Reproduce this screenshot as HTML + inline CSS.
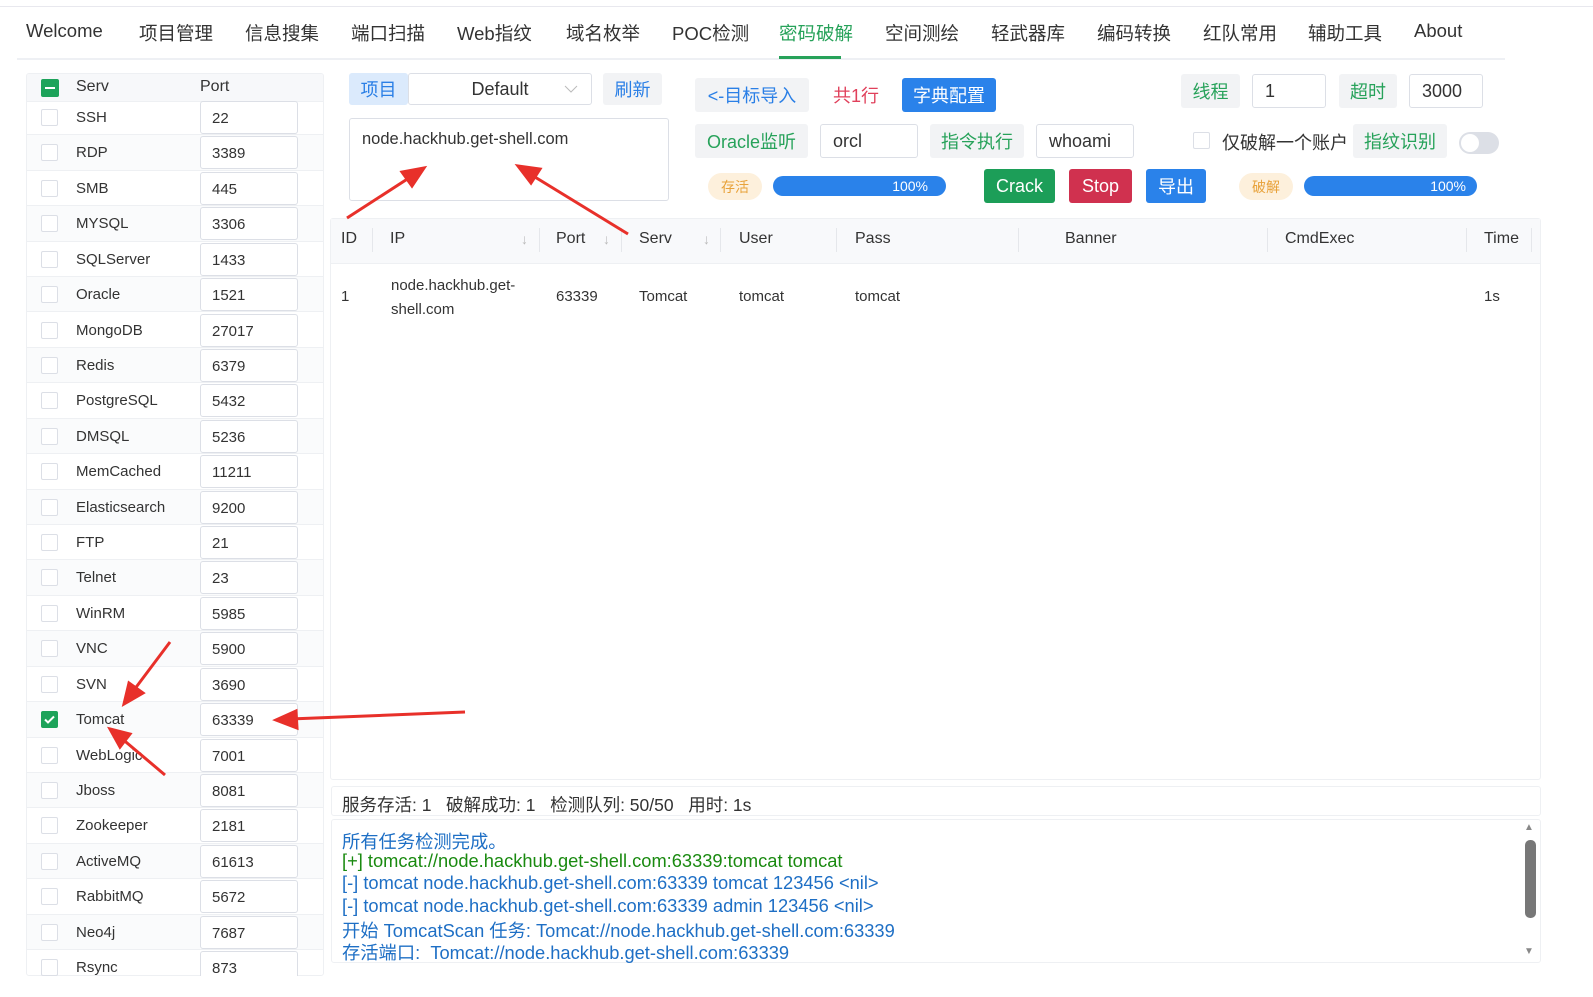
<!DOCTYPE html>
<html><head><meta charset="utf-8"><style>
*{box-sizing:border-box;margin:0;padding:0}
body{width:1593px;height:997px;background:#fff;font-family:"Liberation Sans","Noto Sans CJK SC",sans-serif;color:#333;position:relative;overflow:hidden}
.a{position:absolute}
.nav span{position:absolute;top:20px;font-size:18.5px;color:#333}
.btn{position:absolute;display:flex;align-items:center;justify-content:center;font-size:18px;border-radius:3px}
.gbtn{background:#f2f3f5;color:#27a25a}
.inp{position:absolute;border:1px solid #dcdfe6;border-radius:3px;background:#fff;font-size:18px;padding-left:12px;display:flex;align-items:center;color:#333}
.row{position:absolute;left:27px;width:296px;height:35.4px;border-bottom:1px solid #eef0f3;font-size:15px}
.row .cb{position:absolute;left:14px;top:9px;width:17px;height:17px;border:1px solid #dcdfe6;border-radius:2px;background:#fff}
.row .n{position:absolute;left:49px;top:9px}
.row .p{position:absolute;left:173px;top:1px;width:98px;height:33px;border:1px solid #dcdfe6;border-radius:3px;background:#fff;padding:8px 0 0 11px}
.th{position:absolute;top:230px;font-size:16px;color:#333}
.log div{height:22.2px;font-size:18.3px;color:#1e6fc5;white-space:nowrap}
</style></head><body>
<div class="a" style="left:0;top:6px;width:1593px;height:1px;background:#e8e8ee"></div>
<div class="nav">
<span style="left:26px">Welcome</span><span style="left:139px">项目管理</span><span style="left:245px">信息搜集</span><span style="left:351px">端口扫描</span><span style="left:457px">Web指纹</span><span style="left:566px">域名枚举</span><span style="left:672px">POC检测</span><span style="left:779px;color:#27a25a">密码破解</span><span style="left:885px">空间测绘</span><span style="left:991px">轻武器库</span><span style="left:1097px">编码转换</span><span style="left:1203px">红队常用</span><span style="left:1308px">辅助工具</span><span style="left:1414px">About</span>
</div>
<div class="a" style="left:17px;top:58px;width:1488px;height:2px;background:#eef0f4"></div>
<div class="a" style="left:779px;top:56px;width:62px;height:3px;background:#27a25a"></div>

<div class="a" style="left:26px;top:73px;width:298px;height:903px;border:1px solid #eef0f3;border-radius:3px;overflow:hidden">
<div class="a" style="left:0;top:0;width:298px;height:28px;background:#f7f8fa;border-bottom:1px solid #eef0f3"></div>
<div class="a" style="left:14px;top:5px;width:18px;height:18px;background:#1da35a;border-radius:2px"><div class="a" style="left:4px;top:8px;width:10px;height:2px;background:#fff"></div></div>
<div class="a" style="left:49px;top:4px;font-size:16px">Serv</div>
<div class="a" style="left:173px;top:4px;font-size:16px">Port</div>
</div>
<div id="rows"></div>
<script>
var d=[["SSH",22],["RDP",3389],["SMB",445],["MYSQL",3306],["SQLServer",1433],["Oracle",1521],["MongoDB",27017],["Redis",6379],["PostgreSQL",5432],["DMSQL",5236],["MemCached",11211],["Elasticsearch",9200],["FTP",21],["Telnet",23],["WinRM",5985],["VNC",5900],["SVN",3690],["Tomcat",63339],["WebLogic",7001],["Jboss",8081],["Zookeeper",2181],["ActiveMQ",61613],["RabbitMQ",5672],["Neo4j",7687],["Rsync",873]];
var h="";d.forEach(function(r,i){var t=100+i*35.42;var ck=r[0]=="Tomcat";
h+='<div class="row" style="top:'+t+'px;'+(i%2?'background:#fafbfc':'')+'"><div class="cb" style="'+(ck?'background:#1da35a;border-color:#1da35a':'')+'">'+(ck?'<svg width="15" height="15" viewBox="0 0 15 15"><path d="M3 7.5l3 3 6-6" stroke="#fff" stroke-width="2" fill="none"/></svg>':'')+'</div><div class="n">'+r[0]+'</div><div class="p">'+r[1]+'</div></div>';});
document.getElementById("rows").innerHTML=h;
</script>
<div class="a" style="left:0;top:976px;width:340px;height:21px;background:#fff"></div>

<div class="btn" style="left:349px;top:73px;width:59px;height:32px;background:#dbeafc;color:#2a7fe6">项目</div>
<div class="inp" style="left:408px;top:73px;width:184px;height:32px;justify-content:center;padding:0">Default</div>
<svg class="a" style="left:564px;top:84px" width="14" height="10"><path d="M1 2l6 6 6-6" stroke="#bbb" fill="none"/></svg>
<div class="btn" style="left:603px;top:73px;width:59px;height:32px;background:#f2f3f5;color:#2a7fe6">刷新</div>
<div class="inp" style="left:349px;top:118px;width:320px;height:83px;align-items:flex-start;padding-top:11px;font-size:16.5px">node.hackhub.get-shell.com</div>

<div class="btn" style="left:695px;top:78px;width:114px;height:34px;background:#f2f3f5;color:#2a7fe6">&lt;-目标导入</div>
<div class="a" style="left:833px;top:82px;font-size:18px;color:#e0405b">共1行</div>
<div class="btn" style="left:902px;top:78px;width:94px;height:34px;background:#2a82ea;color:#fff">字典配置</div>
<div class="btn gbtn" style="left:1181px;top:74px;width:59px;height:34px">线程</div>
<div class="inp" style="left:1252px;top:74px;width:74px;height:34px">1</div>
<div class="btn gbtn" style="left:1339px;top:74px;width:58px;height:34px">超时</div>
<div class="inp" style="left:1409px;top:74px;width:74px;height:34px">3000</div>

<div class="btn gbtn" style="left:695px;top:124px;width:113px;height:34px">Oracle监听</div>
<div class="inp" style="left:820px;top:124px;width:98px;height:34px">orcl</div>
<div class="btn gbtn" style="left:930px;top:124px;width:94px;height:34px">指令执行</div>
<div class="inp" style="left:1036px;top:124px;width:98px;height:34px">whoami</div>
<div class="a" style="left:1193px;top:132px;width:17px;height:17px;border:1px solid #dcdfe6;border-radius:2px"></div>
<div class="a" style="left:1222px;top:129px;font-size:18px">仅破解一个账户</div>
<div class="btn gbtn" style="left:1353px;top:124px;width:94px;height:34px">指纹识别</div>
<div class="a" style="left:1459px;top:132px;width:40px;height:22px;border-radius:11px;background:#dcdfe6"><div class="a" style="left:2px;top:2px;width:18px;height:18px;border-radius:50%;background:#fff"></div></div>

<div class="btn" style="left:708px;top:173px;width:54px;height:27px;border-radius:14px;background:#fdf0dc;color:#e8a23a;font-size:14px">存活</div>
<div class="a" style="left:773px;top:176px;width:173px;height:20px;border-radius:10px;background:#2a82ea;color:#fff;font-size:14px;text-align:right;padding-right:18px;line-height:20px">100%</div>
<div class="btn" style="left:984px;top:169px;width:71px;height:34px;background:#1c9e58;color:#fff">Crack</div>
<div class="btn" style="left:1069px;top:169px;width:63px;height:34px;background:#d0314f;color:#fff">Stop</div>
<div class="btn" style="left:1146px;top:169px;width:60px;height:34px;background:#2a82ea;color:#fff">导出</div>
<div class="btn" style="left:1239px;top:173px;width:54px;height:27px;border-radius:14px;background:#fdf0dc;color:#e8a23a;font-size:14px">破解</div>
<div class="a" style="left:1304px;top:176px;width:173px;height:20px;border-radius:10px;background:#2a82ea;color:#fff;font-size:14px;text-align:right;padding-right:11px;line-height:20px">100%</div>

<div class="a" style="left:330px;top:218px;width:1211px;height:562px;border:1px solid #eef0f3;border-radius:3px"></div>
<div class="a" style="left:331px;top:219px;width:1209px;height:45px;background:#f8f9fb;border-bottom:1px solid #eef0f3"></div>
<div class="th" style="left:341px">ID</div><div class="th" style="left:390px">IP</div><div class="th" style="left:556px">Port</div><div class="th" style="left:639px">Serv</div><div class="th" style="left:739px">User</div><div class="th" style="left:855px">Pass</div><div class="th" style="left:1065px">Banner</div><div class="th" style="left:1285px">CmdExec</div><div class="th" style="left:1484px">Time</div>
<div class="a" style="left:372px;top:228px;width:1px;height:24px;background:#e5e7eb"></div>
<div class="a" style="left:539px;top:228px;width:1px;height:24px;background:#e5e7eb"></div>
<div class="a" style="left:621px;top:228px;width:1px;height:24px;background:#e5e7eb"></div>
<div class="a" style="left:720px;top:228px;width:1px;height:24px;background:#e5e7eb"></div>
<div class="a" style="left:836px;top:228px;width:1px;height:24px;background:#e5e7eb"></div>
<div class="a" style="left:1018px;top:228px;width:1px;height:24px;background:#e5e7eb"></div>
<div class="a" style="left:1267px;top:228px;width:1px;height:24px;background:#e5e7eb"></div>
<div class="a" style="left:1466px;top:228px;width:1px;height:24px;background:#e5e7eb"></div>
<div class="a" style="left:1531px;top:228px;width:1px;height:24px;background:#e5e7eb"></div>
<div class="a" style="left:521px;top:231px;color:#bbb;font-size:14px">↓</div>
<div class="a" style="left:603px;top:231px;color:#bbb;font-size:14px">↓</div>
<div class="a" style="left:703px;top:231px;color:#bbb;font-size:14px">↓</div>
<div class="a" style="left:341px;top:288px;font-size:15px">1</div>
<div class="a" style="left:391px;top:274px;font-size:15px;line-height:24px">node.hackhub.get-<br>shell.com</div>
<div class="a" style="left:556px;top:288px;font-size:15px">63339</div>
<div class="a" style="left:639px;top:288px;font-size:15px">Tomcat</div>
<div class="a" style="left:739px;top:288px;font-size:15px">tomcat</div>
<div class="a" style="left:855px;top:288px;font-size:15px">tomcat</div>
<div class="a" style="left:1484px;top:288px;font-size:15px">1s</div>

<div class="a" style="left:331px;top:786px;width:1210px;height:30px;border:1px solid #eef0f3;border-radius:3px;font-size:17.5px;padding:5px 0 0 10px;white-space:nowrap">服务存活: 1&nbsp;&nbsp;&nbsp;破解成功: 1&nbsp;&nbsp;&nbsp;检测队列: 50/50&nbsp;&nbsp;&nbsp;用时: 1s</div>
<div class="a log" style="left:331px;top:819px;width:1210px;height:144px;border:1px solid #eef0f3;border-radius:3px;padding:8px 0 0 10px">
<div>所有任务检测完成。</div>
<div style="color:#1a8a10">[+] tomcat://node.hackhub.get-shell.com:63339:tomcat tomcat</div>
<div>[-] tomcat node.hackhub.get-shell.com:63339 tomcat 123456 &lt;nil&gt;</div>
<div>[-] tomcat node.hackhub.get-shell.com:63339 admin 123456 &lt;nil&gt;</div>
<div>开始 TomcatScan 任务: Tomcat://node.hackhub.get-shell.com:63339</div>
<div>存活端口:&nbsp; Tomcat://node.hackhub.get-shell.com:63339</div>
</div>
<div class="a" style="left:1525px;top:840px;width:11px;height:78px;border-radius:5px;background:#777"></div>
<div class="a" style="left:1524px;top:822px;font-size:10px;color:#888">▲</div>
<div class="a" style="left:1524px;top:946px;font-size:10px;color:#888">▼</div>

<svg class="a" style="left:0;top:0" width="1593" height="997">
<g stroke="#e8302a" stroke-width="3" fill="#e8302a">
<line x1="347" y1="218" x2="412" y2="176"/><polygon points="424,168 402,172 412,186"/>
<line x1="628" y1="234" x2="530" y2="174"/><polygon points="518,166 531,183 540,169"/>
<line x1="170" y1="642" x2="131" y2="694"/><polygon points="124,704 129,683 143,693"/>
<line x1="465" y1="712" x2="290" y2="719"/><polygon points="276,720 296,711 297,728"/>
<line x1="165" y1="775" x2="120" y2="737"/><polygon points="110,729 130,734 120,747"/>
</g></svg>
</body></html>
